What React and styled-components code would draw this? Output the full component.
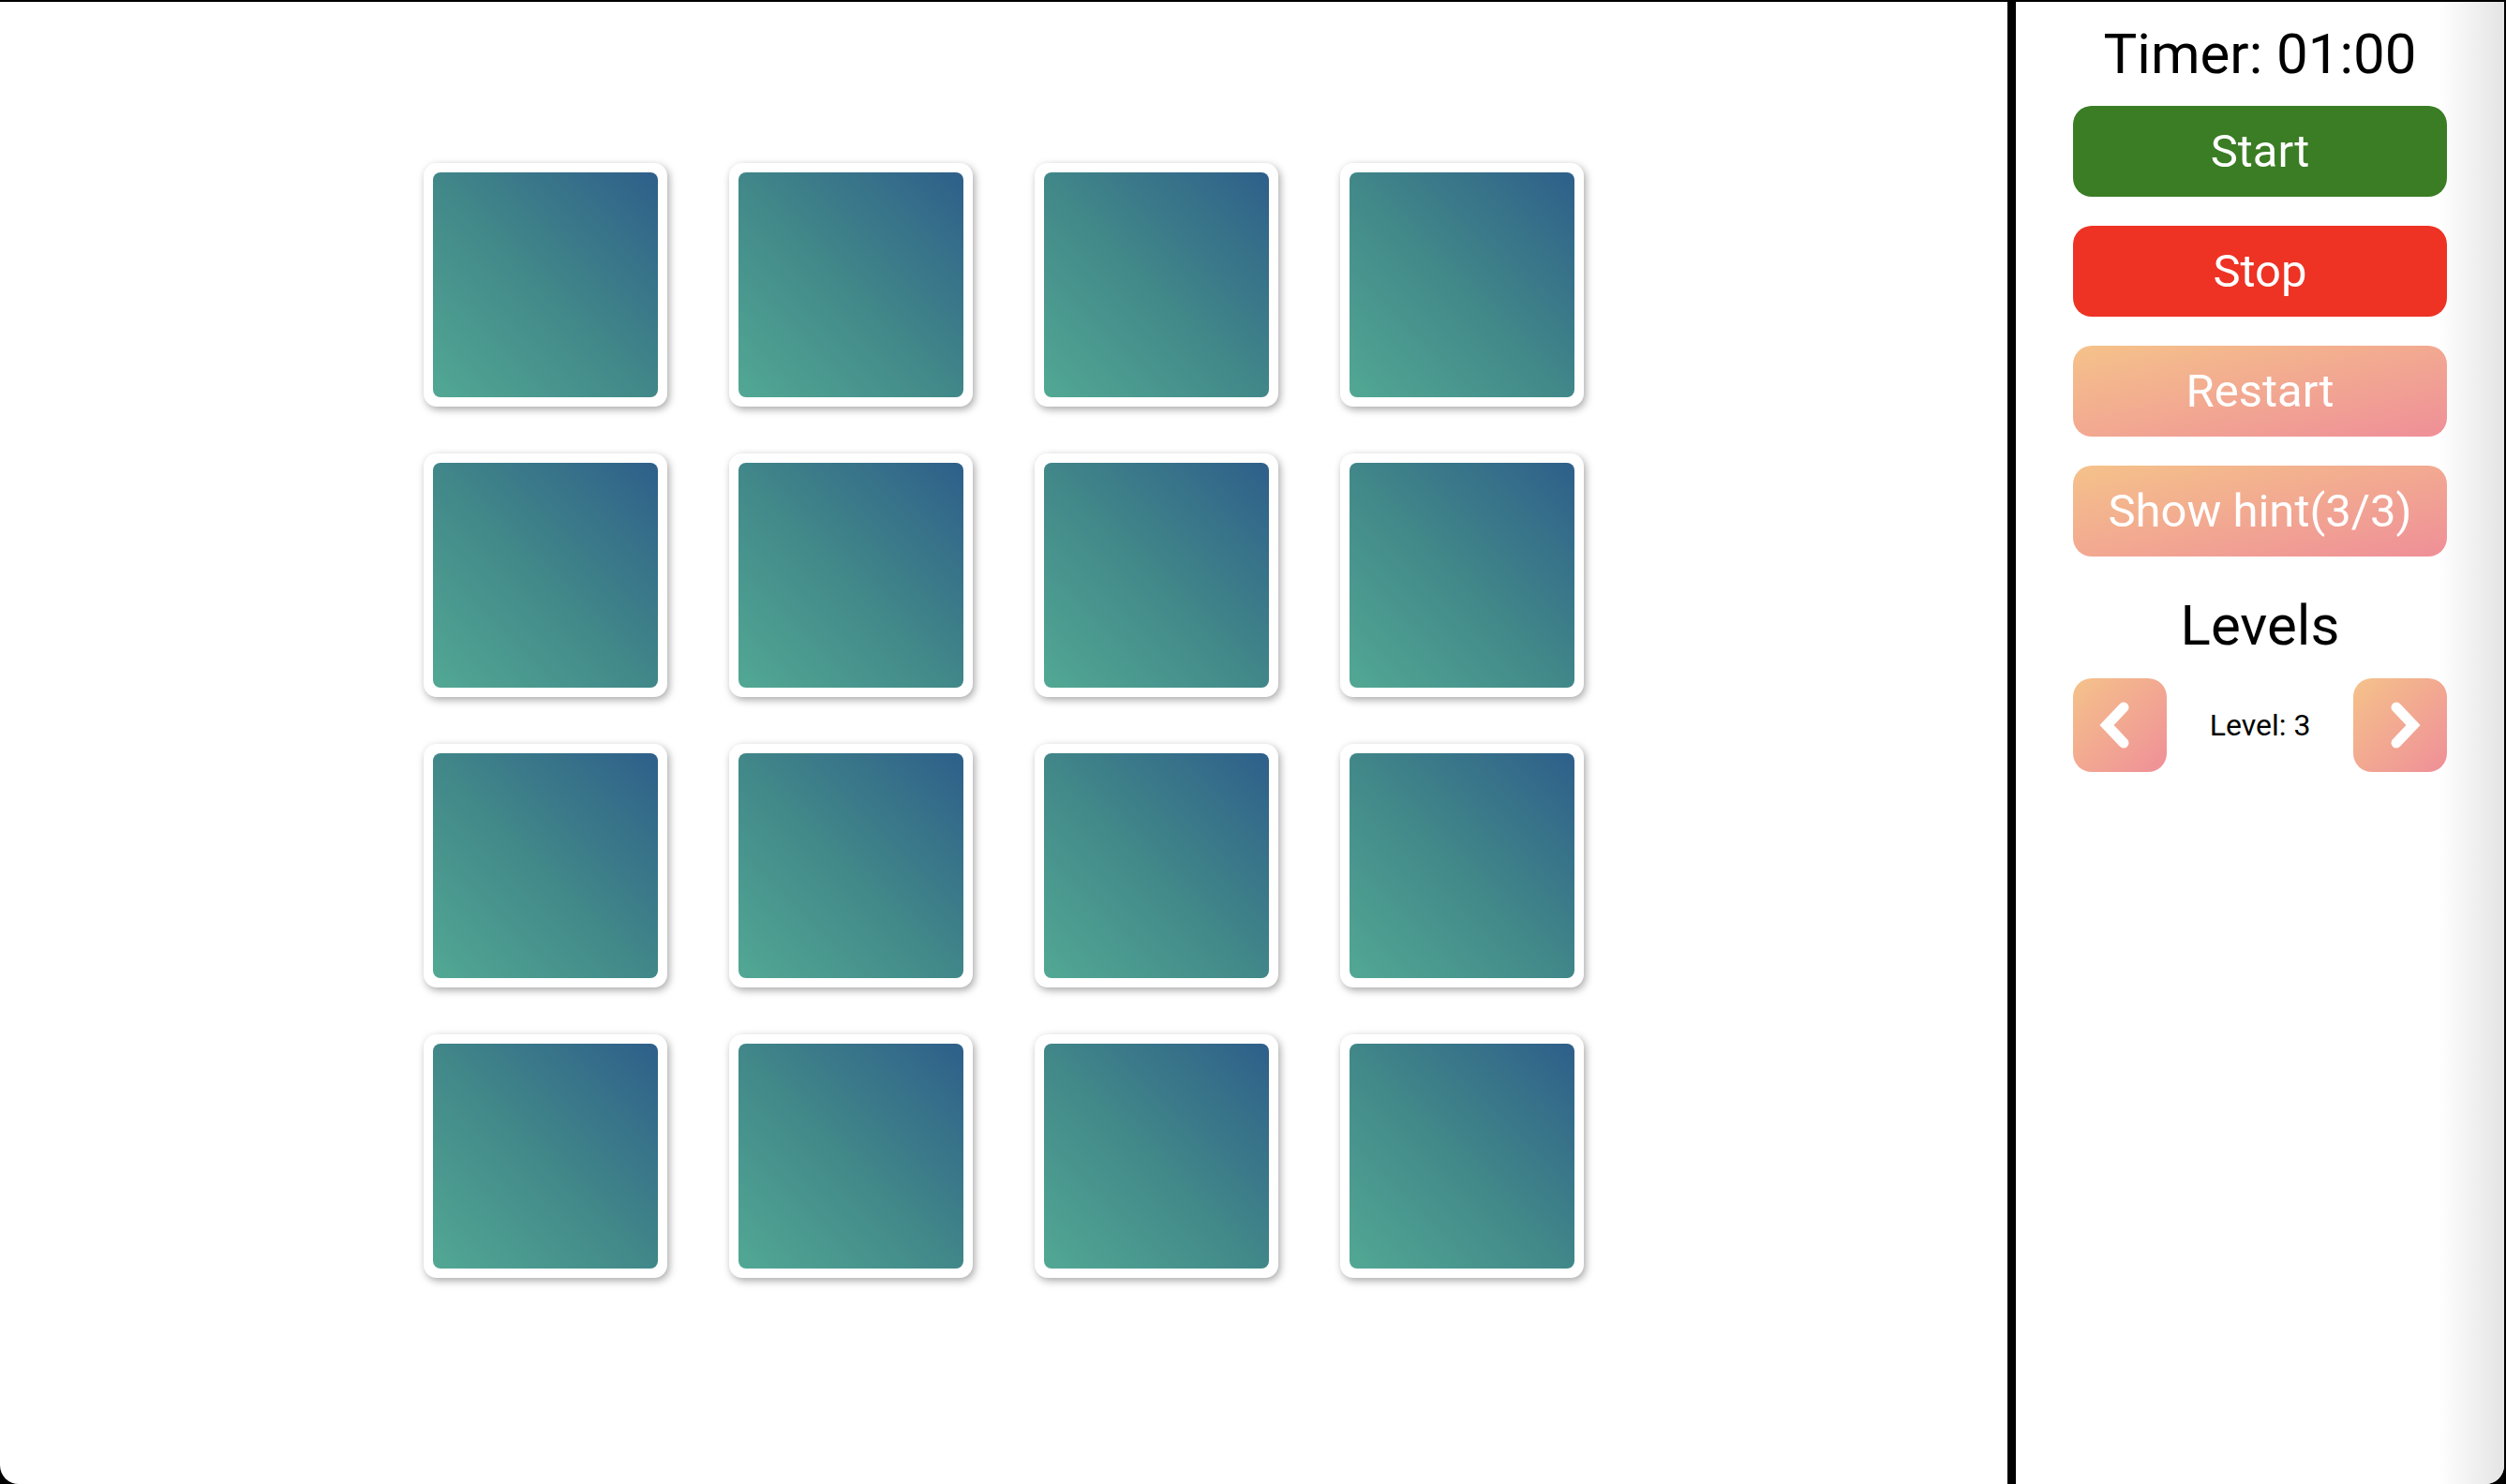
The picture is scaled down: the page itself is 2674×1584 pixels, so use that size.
import React from 'react';
import styled, { createGlobalStyle } from 'styled-components';

const GlobalStyle = createGlobalStyle`
  html, body {
    margin: 0;
    padding: 0;
    height: 100%;
    background: #000;
    overflow: hidden;
  }
  #root {
    height: 100%;
  }
`;

const Frame = styled.div`
  display: flex;
  height: calc(100vh - 2px);
  margin: 2px 2px 0 0;
  background: #fff;
  border-radius: 0 0 20px 20px;
  overflow: hidden;
  font-family: Roboto, "Liberation Sans", sans-serif;
`;

const Board = styled.main`
  flex: 1;
  display: flex;
  justify-content: center;
  align-items: flex-start;
  padding-top: 172px;
  border-right: 9px solid #000;
`;

const Grid = styled.div`
  display: grid;
  grid-template-columns: repeat(4, 260px);
  grid-auto-rows: 260px;
  column-gap: 66px;
  row-gap: 50px;
`;

const Card = styled.div`
  box-sizing: border-box;
  padding: 10px;
  background: #fff;
  border-radius: 14px;
  box-shadow: 2px 3px 8px rgba(0, 0, 0, 0.35);
`;

const CardFace = styled.div`
  width: 100%;
  height: 100%;
  border-radius: 8px;
  background: linear-gradient(45deg, #52a894 0%, #418789 50%, #2e5f8a 100%);
`;

const Sidebar = styled.aside`
  width: 521px;
  display: flex;
  flex-direction: column;
  align-items: center;
  background: linear-gradient(to right, #fff 0, #fff calc(100% - 70px), #e4e4e4 100%);
`;

const Heading = styled.h2`
  margin: ${p => p.$top}px 0 0;
  font-size: 60px;
  font-weight: 400;
  line-height: normal;
  color: #000;
`;

const ActionButton = styled.button`
  width: 399px;
  height: 97px;
  margin-top: ${p => p.$top}px;
  border: none;
  border-radius: 20px;
  color: #fff;
  font-family: inherit;
  font-size: 49px;
  font-weight: 400;
  cursor: pointer;
  background: ${p =>
    p.$variant === 'start'
      ? '#3a7d24'
      : p.$variant === 'stop'
      ? '#ee3224'
      : 'linear-gradient(to bottom right, #f5c28a, #ef8f98)'};
`;

const LevelRow = styled.div`
  width: 399px;
  margin-top: 21px;
  display: flex;
  justify-content: space-between;
  align-items: center;
`;

const ArrowButton = styled.button`
  width: 100px;
  height: 100px;
  padding: 0;
  border: none;
  border-radius: 20px;
  display: flex;
  align-items: center;
  justify-content: center;
  cursor: pointer;
  background: linear-gradient(to bottom right, #f5c28a, #ef8f98);
`;

const LevelLabel = styled.span`
  font-size: 32px;
  color: #000;
`;

const Chevron = ({ dir }) => (
  <svg width="100" height="100" viewBox="0 0 100 100">
    <polyline
      points={dir === 'left' ? '54,31 36,50 54,69' : '46,31 64,50 46,69'}
      fill="none"
      stroke="#fff"
      strokeWidth="11"
      strokeLinecap="round"
      strokeLinejoin="miter"
    />
  </svg>
);

export default function App() {
  const cards = Array.from({ length: 16 }, (_, i) => i);
  return (
    <>
      <GlobalStyle />
      <Frame>
        <Board>
          <Grid>
            {cards.map(i => (
              <Card key={i}>
                <CardFace />
              </Card>
            ))}
          </Grid>
        </Board>
        <Sidebar>
          <Heading $top={20}>Timer: 01:00</Heading>
          <ActionButton $variant="start" $top={20}>Start</ActionButton>
          <ActionButton $variant="stop" $top={31}>Stop</ActionButton>
          <ActionButton $top={31}>Restart</ActionButton>
          <ActionButton $top={31}>Show hint(3/3)</ActionButton>
          <Heading $top={38}>Levels</Heading>
          <LevelRow>
            <ArrowButton>
              <Chevron dir="left" />
            </ArrowButton>
            <LevelLabel>Level: 3</LevelLabel>
            <ArrowButton>
              <Chevron dir="right" />
            </ArrowButton>
          </LevelRow>
        </Sidebar>
      </Frame>
    </>
  );
}
